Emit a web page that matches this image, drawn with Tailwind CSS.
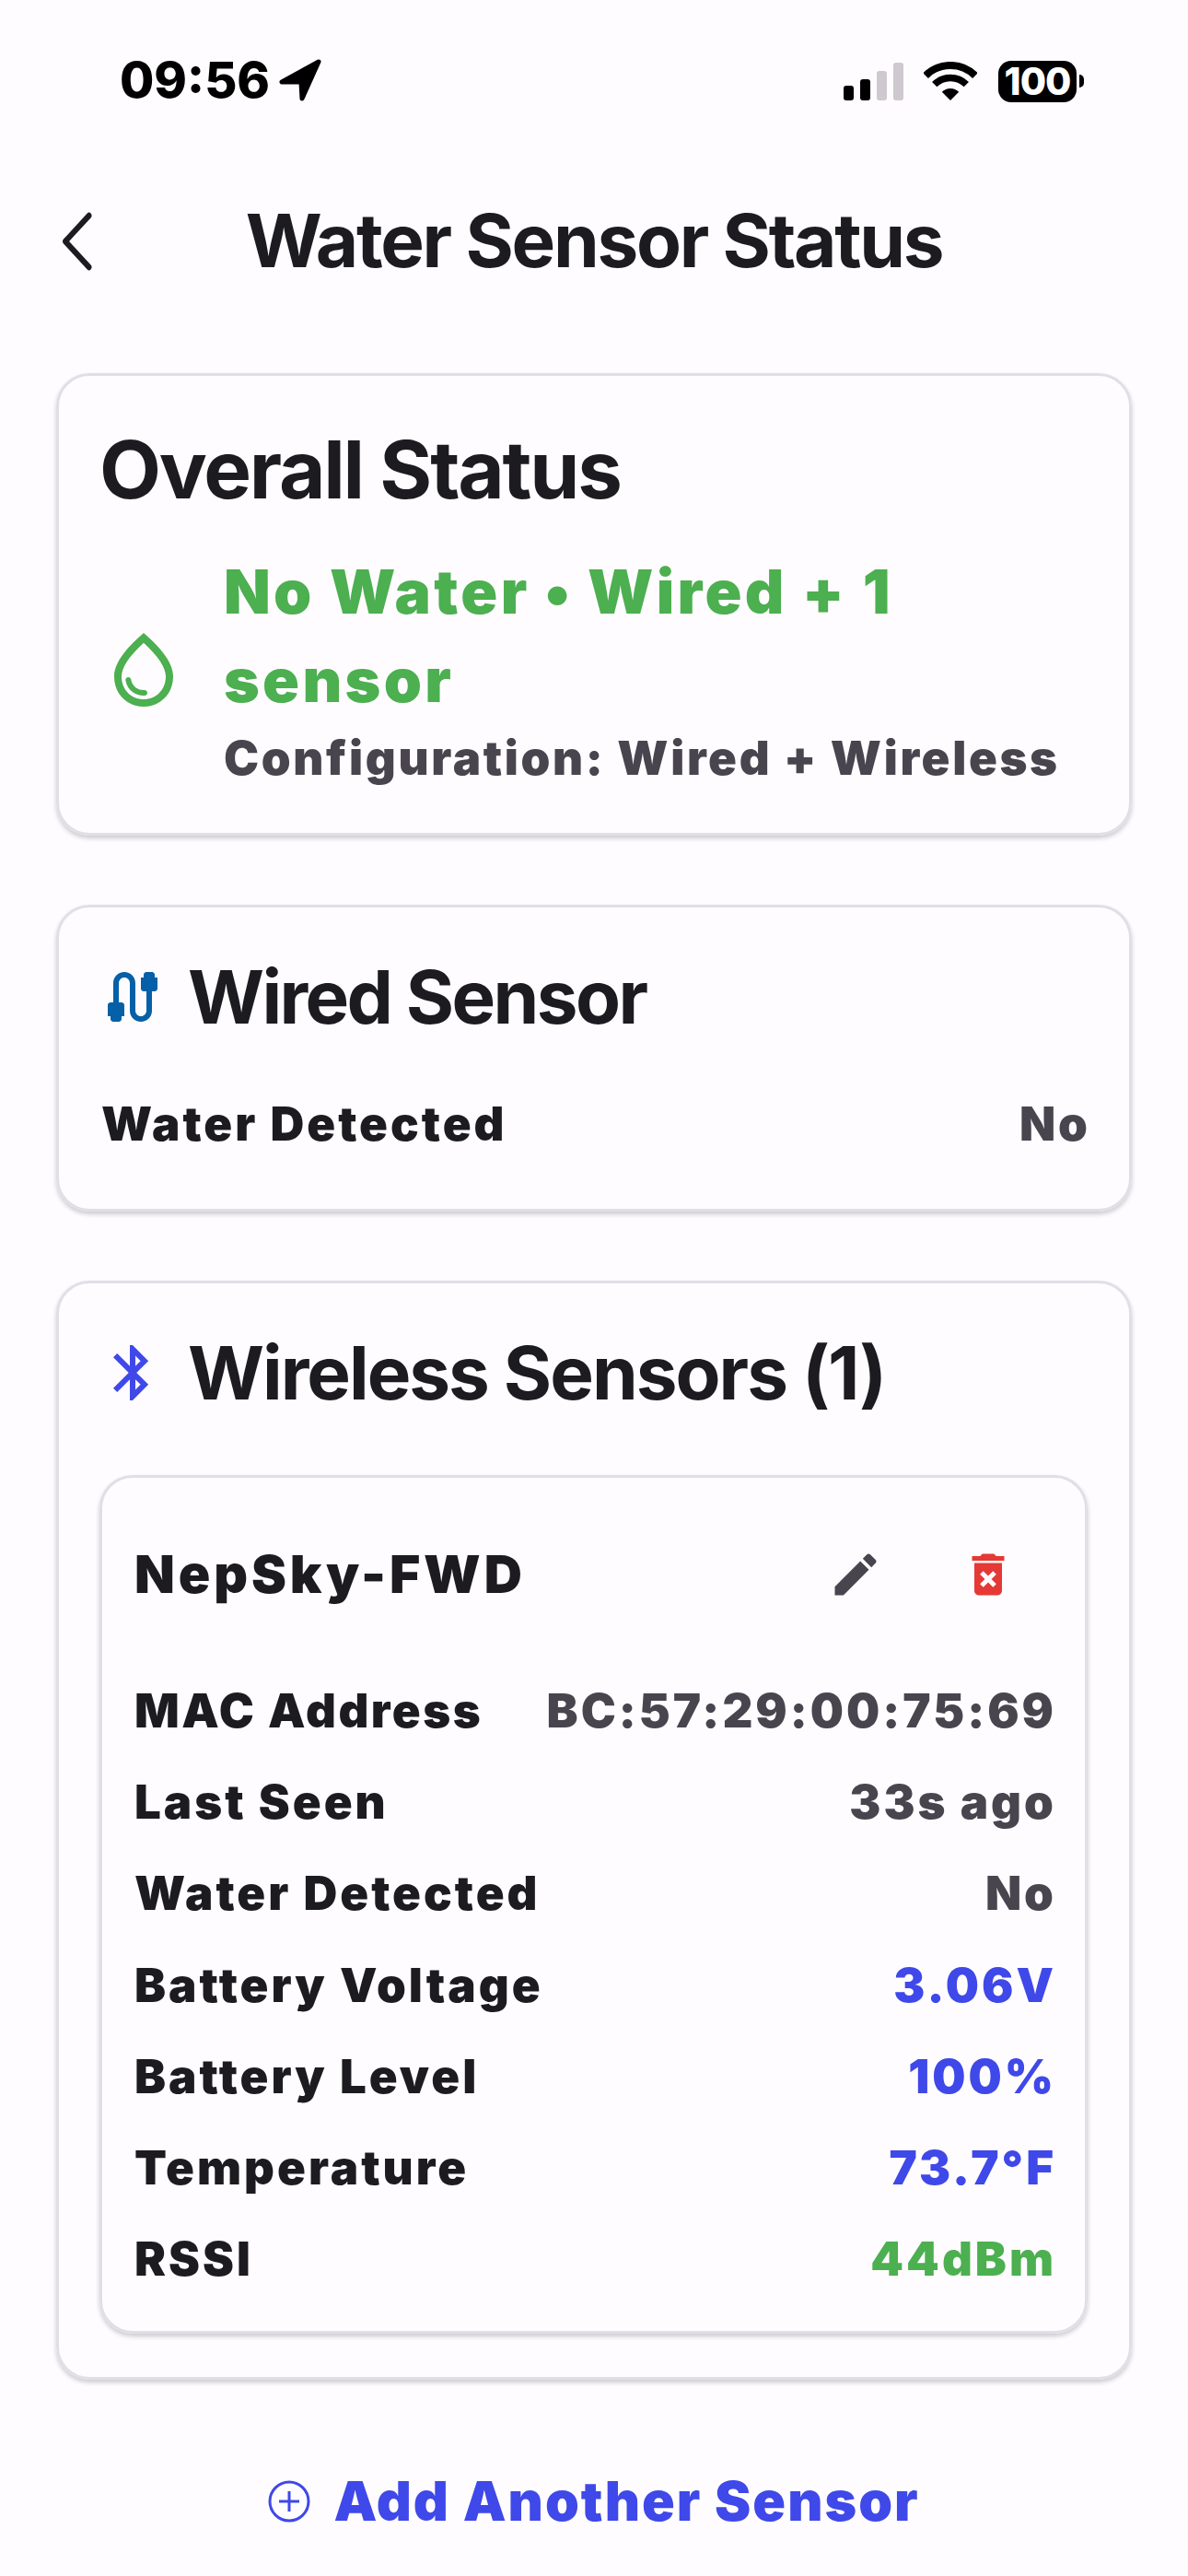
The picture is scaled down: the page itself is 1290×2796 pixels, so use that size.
<!DOCTYPE html>
<html lang="en">
<head>
  <meta charset="UTF-8">
  <meta name="viewport" content="width=device-width, initial-scale=1.0">
  <title>Water Sensor Status</title>
  <script src="https://cdn.jsdelivr.net/npm/@tailwindcss/browser@4"></script>
</head>
<body class="bg-[#fffcff] font-[family-name:Inter,sans-serif] text-[#1c1b1f]">
  <div class="w-[1290px] h-[2796px] overflow-hidden">
    <!-- Status bar -->
    <div class="h-[172px] pt-[62px] pl-[130px] pr-[113px] flex items-start justify-between text-black">
      <div class="flex items-center gap-[10px] h-[50px]">
        <span class="text-[54px] leading-[50px] font-extrabold">09:56</span>
        <svg class="w-[46px] h-[46px]" viewBox="0 0 46 46"><path d="M43 3 L3 25 L24 25 L25 43 Z" fill="#000" stroke="#000" stroke-width="5" stroke-linejoin="round"/></svg>
      </div>
      <div class="flex items-end h-[47px]">
        <div class="flex items-end gap-[7px] mr-[22px]">
          <div class="w-[11px] h-[16px] rounded-[3px] bg-black"></div>
          <div class="w-[11px] h-[23px] rounded-[3px] bg-black"></div>
          <div class="w-[11px] h-[32px] rounded-[3px] bg-[#cdc9ce]"></div>
          <div class="w-[11px] h-[41px] rounded-[3px] bg-[#cdc9ce]"></div>
        </div>
        <svg class="w-[58px] h-[42px] mr-[23px]" viewBox="0 0 58 42" fill="none"><path d="M2.1 15.1A38 38 0 0 1 55.9 15.1" stroke="#000" stroke-width="8"/><path d="M11.7 24.7A24.5 24.5 0 0 1 46.3 24.7" stroke="#000" stroke-width="7.5"/><path d="M29 42L19.8 32.8A13 13 0 0 1 38.2 32.8Z" fill="#000"/></svg>
        <div class="w-[85px] h-[45px] rounded-[14px] bg-black text-white flex items-center justify-center text-[41px] font-extrabold tracking-[-1px] mb-[-2px]">100</div>
        <div class="w-[5px] h-[14px] rounded-r-full bg-black ml-[3px] mb-[14px]"></div>
      </div>
    </div>

    <!-- Header -->
    <div class="h-[178px] flex items-center relative">
      <svg class="absolute left-[60px] top-[56px] w-[44px] h-[68px]" viewBox="0 0 44 68" fill="none"><path d="M38 6 L8 34 L38 62" stroke="#1c1b1f" stroke-width="6.5" stroke-linecap="round" stroke-linejoin="round" transform="translate(4 0) scale(.86 1)"/></svg>
      <h1 class="w-full text-center text-[80px] leading-[90px] font-bold tracking-[-2.3px]">Water Sensor Status</h1>
    </div>

    <div class="px-[61px] mt-[55px] flex flex-col gap-[75px]">
      <!-- Overall status -->
      <section class="h-[502px] border-[3px] border-[#e0dfe6] rounded-[36px] shadow-[0_3px_5px_rgba(0,0,0,0.2)] pl-[44px] pr-[45px] pt-[60px]">
        <h2 class="text-[87px] leading-[84px] font-bold tracking-[-2.2px]">Overall Status</h2>
        <div class="flex items-center gap-[39px] mt-[42px]">
          <svg class="w-[96px] h-[96px] shrink-0" viewBox="0 0 24 24" fill="#4caf50"><path d="M12,2c-5.33,4.55-8,8.48-8,11.8c0,4.98,3.8,8.2,8,8.2s8-3.22,8-8.2C20,10.48,17.33,6.55,12,2z M12,20c-3.35,0-6-2.57-6-6.2c0-2.34,1.95-5.44,6-9.14c4.05,3.7,6,6.79,6,9.14C18,17.43,15.35,20,12,20z M7.83,14c0.37,0,0.67,0.26,0.74,0.62c0.41,2.22,2.28,2.98,3.64,2.87c0.43-0.02,0.79,0.32,0.79,0.75c0,0.4-0.32,0.73-0.72,0.75c-2.13,0.13-4.62-1.09-5.19-4.12C7.01,14.42,7.37,14,7.83,14z"/></svg>
          <div>
            <div class="text-[66px] leading-[96px] font-black text-[#4caf50] tracking-[3.3px]">No Water • Wired + 1 sensor</div>
            <div class="pt-[1px] text-[51px] leading-[72px] font-black text-[#49454f] tracking-[2.65px] whitespace-nowrap">Configuration: Wired + Wireless</div>
          </div>
        </div>
      </section>

      <!-- Wired -->
      <section class="h-[333px] border-[3px] border-[#e0dfe6] rounded-[36px] shadow-[0_3px_5px_rgba(0,0,0,0.2)] pl-[44px] pr-[45px] pt-[52px]">
        <div class="flex items-center gap-[24px]">
          <svg class="w-[72px] h-[72px]" viewBox="0 0 24 24" fill="#0560a8"><path d="M20,5V4c0-0.55-0.45-1-1-1h-2c-0.55,0-1,0.45-1,1v1h-1v4c0,0.55,0.45,1,1,1h1v7c0,1.1-0.9,2-2,2s-2-0.9-2-2V7c0-2.21-1.79-4-4-4S5,4.79,5,7v7H4c-0.55,0-1,0.45-1,1v4h1v1c0,0.55,0.45,1,1,1h2c0.55,0,1-0.45,1-1v-1h1v-4c0-0.55-0.45-1-1-1H7V7c0-1.1,0.9-2,2-2s2,0.9,2,2v10c0,2.21,1.79,4,4,4s4-1.79,4-4v-7h1c0.55,0,1-0.45,1-1V5H20z"/></svg>
          <h2 class="text-[80px] leading-[90px] font-bold tracking-[-2.6px]">Wired Sensor</h2>
        </div>
        <div class="flex justify-between items-center mt-[57px] pl-[2px] mr-[-3px] text-[51px] leading-[72px] font-black tracking-[3px]">
          <span>Water Detected</span><span class="text-[#49454f]">No</span>
        </div>
      </section>

      <!-- Wireless -->
      <section class="h-[1193px] border-[3px] border-[#e0dfe6] rounded-[36px] shadow-[0_3px_5px_rgba(0,0,0,0.2)] pl-[44px] pr-[45px] pt-[52px]">
        <div class="flex items-center gap-[24px]">
          <svg class="w-[72px] h-[72px]" viewBox="0 0 24 24" fill="#3f48e8"><path d="M17.71 7.71L12 2h-1v7.59L6.41 5 5 6.41 10.59 12 5 17.59 6.41 19 11 14.41V22h1l5.71-5.71-4.3-4.29 4.3-4.29zM13 5.83l1.88 1.88L13 9.59V5.83zm1.88 10.46L13 18.17v-3.76l1.88 1.88z"/></svg>
          <h2 class="text-[80px] leading-[90px] font-bold tracking-[-2px]">Wireless Sensors (1)</h2>
        </div>
        <div class="mt-[66px] h-[932px] border-[3px] border-[#e0dfe6] rounded-[36px] shadow-[0_3px_5px_rgba(0,0,0,0.2)] pl-[35px] pr-[31px]">
          <div class="h-[203px] pt-[7px] flex items-center justify-between">
            <span class="text-[57px] font-black tracking-[3.9px]">NepSky-FWD</span>
            <div class="flex mr-[2px]">
              <button class="px-[42px] py-[10px]"><svg class="w-[60px] h-[60px]" viewBox="0 0 24 24" fill="#49454f"><path d="M3 17.25V21h3.75L17.81 9.94l-3.75-3.75L3 17.25zM20.71 7.04c.39-.39.39-1.02 0-1.41l-2.34-2.34c-.39-.39-1.02-.39-1.41 0l-1.83 1.83 3.75 3.75 1.83-1.83z"/></svg></button>
              <button class="px-[42px] py-[10px]"><svg class="w-[60px] h-[60px]" viewBox="0 0 24 24" fill="#e53935"><path d="M6 19c0 1.1.9 2 2 2h8c1.1 0 2-.9 2-2V7H6v12zm2.46-7.12l1.41-1.41L12 12.59l2.12-2.12 1.41 1.41L13.41 14l2.12 2.12-1.41 1.41L12 15.41l-2.12 2.12-1.41-1.41L10.59 14l-2.13-2.12zM15.5 4l-1-1h-5l-1 1H5v2h14V4z"/></svg></button>
            </div>
          </div>
          <div class="flex flex-col text-[51px] leading-[99.2px] font-black tracking-[3px]">
            <div class="flex justify-between"><span class="tracking-[2.5px]">MAC Address</span><span class="text-[#49454f]">BC:57:29:00:75:69</span></div>
            <div class="flex justify-between"><span>Last Seen</span><span class="text-[#49454f]">33s ago</span></div>
            <div class="flex justify-between"><span>Water Detected</span><span class="text-[#49454f]">No</span></div>
            <div class="flex justify-between"><span>Battery Voltage</span><span class="text-[#3f48e8]">3.06V</span></div>
            <div class="flex justify-between"><span>Battery Level</span><span class="text-[#3f48e8]">100%</span></div>
            <div class="flex justify-between"><span>Temperature</span><span class="text-[#3f48e8]">73.7°F</span></div>
            <div class="flex justify-between"><span>RSSI</span><span class="text-[#4caf50]">44dBm</span></div>
          </div>
        </div>
      </section>
    </div>

    <!-- Add another -->
    <div class="mt-[96px] flex items-center justify-center gap-[25px] text-[#3f48e8]">
      <svg class="w-[46px] h-[46px]" viewBox="0 0 46 46" fill="none" stroke="#3f48e8" stroke-width="3"><circle cx="23" cy="23" r="21"/><path d="M23 12V34M12 23H34"/></svg>
      <span class="text-[59px] leading-[72px] font-black tracking-[2px]">Add Another Sensor</span>
    </div>
  </div>
</body>
</html>
